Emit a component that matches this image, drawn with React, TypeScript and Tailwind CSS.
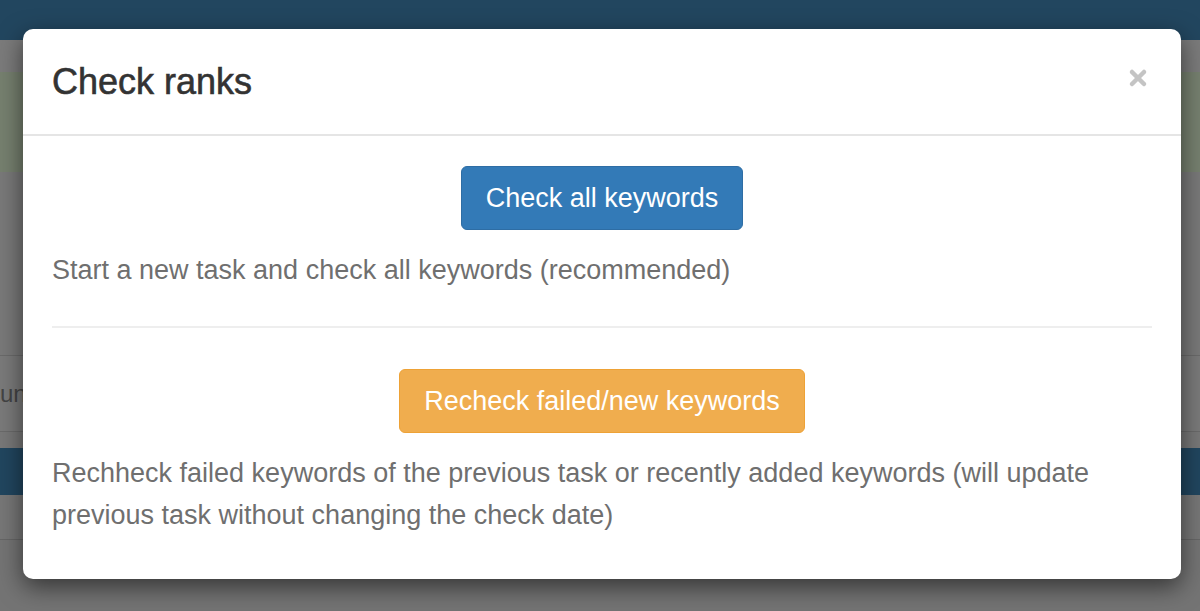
import { X } from "lucide-react";

export default function App() {
    return (
        <div className="relative h-[611px] w-[1200px] overflow-hidden bg-[#777777]" style={{ fontFamily: '"Liberation Sans", Arial, sans-serif' }}>
            {/* dimmed page behind the modal */}
            <div className="flex h-full flex-col">
                <div className="h-[40px] bg-[#22465f]" />
                <div className="h-[32px] bg-[#7b7b7b]" />
                <div className="h-[100px] bg-[#76806f]" />
                <div className="h-[183px] bg-[#797979]" />
                <div className="flex h-[77px] items-center border-y border-[#6a6a6a] bg-[#7a7a7a] text-[24px] text-[#444]">
                    <span>un</span>
                </div>
                <div className="h-[16px] bg-[#787878]" />
                <div className="h-[47px] bg-[#21465f]" />
                <div className="h-[45px] border-b border-[#666] bg-[#777777]" />
                <div className="flex-1 bg-[#747474]" />
            </div>

            <div className="absolute left-[23px] top-[29px] w-[1158px] rounded-[10px] bg-white shadow-[0_8px_24px_rgba(0,0,0,0.55)]">
                <div className="flex h-[107px] items-center justify-between border-b-2 border-[#e5e5e5] px-[29px]">
                    <h4 className="text-[36px] leading-none text-[#333] [-webkit-text-stroke:0.6px_#333]">Check ranks</h4>
                    <X className="-mt-[8px] mr-[2px] h-[24px] w-[24px] text-[#c4c4c4]" strokeWidth={4.5} />
                </div>

                <div className="px-[29px] pb-[43px] pt-[30px] text-[27px] leading-[42px] text-[#6f6f6f]">
                    <div className="flex justify-center">
                        <button className="h-[64px] rounded-[6px] border border-[#2e6da4] bg-[#337ab7] px-[24px] text-[27px] text-white">
                            Check all keywords
                        </button>
                    </div>
                    <p className="mt-[19px]">Start a new task and check all keywords (recommended)</p>

                    <hr className="mb-[41px] mt-[35px] border-t-2 border-[#eeeeee]" />

                    <div className="flex justify-center">
                        <button className="h-[64px] rounded-[6px] border border-[#eea236] bg-[#f0ad4e] px-[24px] text-[27px] text-white">
                            Recheck failed/new keywords
                        </button>
                    </div>
                    <p className="mt-[19px]">
                        Rechheck failed keywords of the previous task or recently added keywords (will update previous task without changing the check date)
                    </p>
                </div>
            </div>
        </div>
    );
}
